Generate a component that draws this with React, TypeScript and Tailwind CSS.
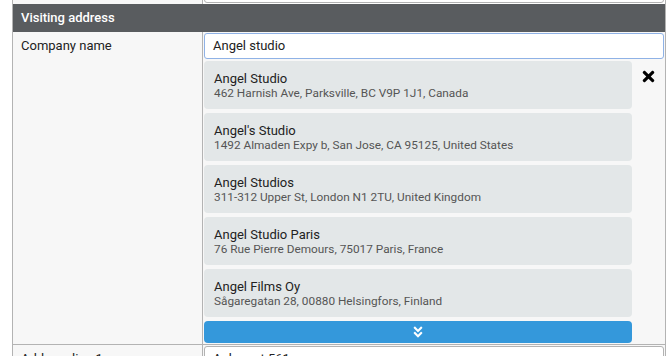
import React from "react";
import { FaTimes, FaAngleDoubleDown } from "react-icons/fa";

const results = [
  { name: "Angel Studio", addr: "462 Harnish Ave, Parksville, BC V9P 1J1, Canada" },
  { name: "Angel's Studio", addr: "1492 Almaden Expy b, San Jose, CA 95125, United States" },
  { name: "Angel Studios", addr: "311-312 Upper St, London N1 2TU, United Kingdom" },
  { name: "Angel Studio Paris", addr: "76 Rue Pierre Demours, 75017 Paris, France" },
  { name: "Angel Films Oy", addr: "Sågaregatan 28, 00880 Helsingfors, Finland" },
];

export default function App() {
  return (
    <div className="h-[356px] w-[668px] overflow-hidden bg-white font-['Roboto',sans-serif] text-[13px] text-[#222]">
      <div className="ml-3 w-[654px] border-x border-[#b3b3b3]">
        {/* previous row (clipped) */}
        <div className="flex h-[4px] overflow-hidden">
          <div className="w-[190px] shrink-0 border-r border-[#b3b3b3] bg-[#f7f7f7]"></div>
          <div className="flex flex-1 flex-col justify-end px-[1px] pb-[1px]">
            <div className="h-[26px] shrink-0 rounded-[3px] border border-[#b3b3b3] bg-white"></div>
          </div>
        </div>
        {/* header */}
        <div className="flex h-[28px] items-center bg-[#595c5f] pl-2 font-medium text-white">
          Visiting address
        </div>
        {/* company name row */}
        <div className="flex border-b border-[#b3b3b3]">
          <div className="w-[190px] shrink-0 border-r border-[#b3b3b3] bg-[#f7f7f7] pl-2 pt-[1px] leading-[26px]">
            Company name
          </div>
          <div className="flex-1 bg-[#f7f7f7] px-[1px] pt-[1px] pb-[1px]">
            <div className="flex h-[26px] items-center rounded-[3px] border border-[#8fb2e6] bg-white pl-2">
              Angel studio
            </div>
            <div className="mt-[2px] flex">
              <div className="flex w-[428px] flex-col gap-[4px]">
                {results.map((r) => (
                  <div key={r.name} className="h-[48px] rounded-[4px] bg-[#e3e7e8] pl-[10px] pt-[9px]">
                    <div className="leading-[17px] text-[#222]">{r.name}</div>
                    <div className="text-[11.8px] leading-[12px] text-[#555]">{r.addr}</div>
                  </div>
                ))}
                <div className="flex h-[22px] items-center justify-center rounded-[4px] bg-[#3498db] text-white">
                  <FaAngleDoubleDown className="h-[14px] w-[14px]" />
                </div>
              </div>
              <div className="flex flex-1 justify-center pt-[7px]">
                <FaTimes className="h-[17px] w-[17px] text-black" />
              </div>
            </div>
          </div>
        </div>
        {/* address line row */}
        <div className="flex">
          <div className="w-[190px] shrink-0 border-r border-[#b3b3b3] bg-[#f7f7f7] pl-2 pt-[1px] leading-[26px]">
            Address line 1
          </div>
          <div className="flex-1 bg-[#f7f7f7] px-[1px] pt-[1px]">
            <div className="flex h-[26px] items-center rounded-[3px] border border-[#b3b3b3] bg-white pl-2">
              Ankersgt 561
            </div>
          </div>
        </div>
      </div>
    </div>
  );
}
